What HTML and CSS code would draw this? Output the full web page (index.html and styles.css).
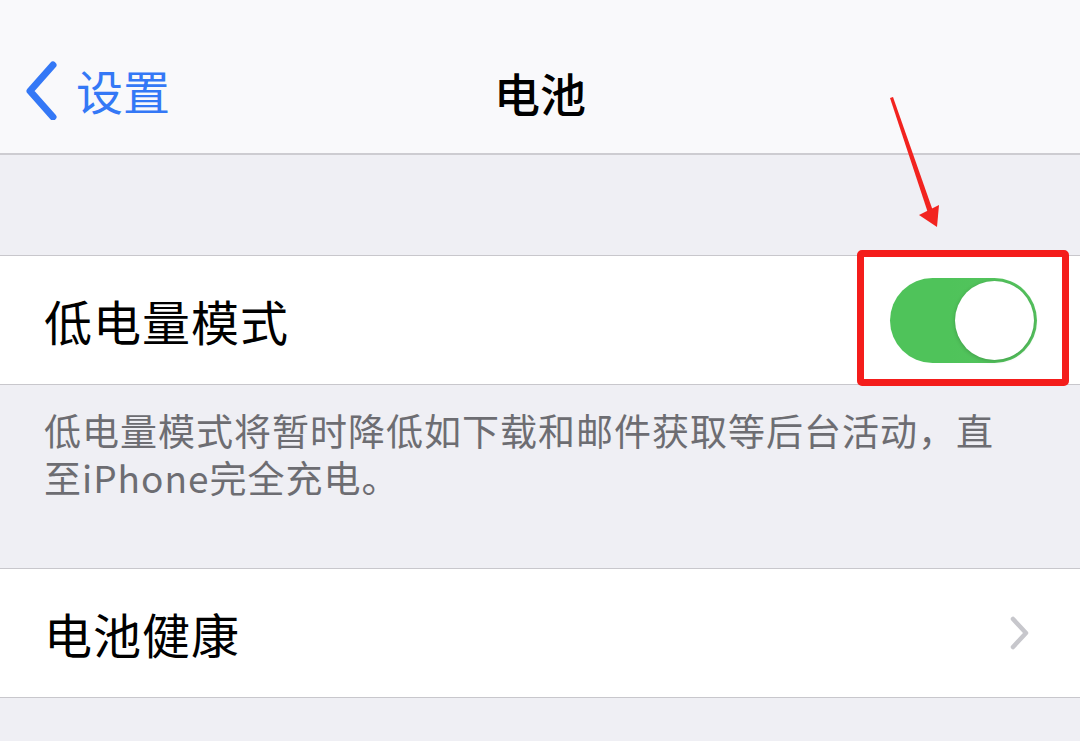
FILE: index.html
```html
<!DOCTYPE html>
<html lang="zh-CN">
<head>
    <meta charset="UTF-8">
    <meta name="viewport" content="width=device-width, initial-scale=1.0">
    <title>电池</title>
    <link rel="stylesheet" href="styles.css">
</head>
<body>
    <!-- Navigation Bar -->
    <div class="nav-bar">
        <div class="nav-back">
            <svg class="back-icon" width="40" height="60" viewBox="0 0 40 60">
                <path d="M31 5 L8 31 L31 57" fill="none" stroke="#3478f6" stroke-width="7" stroke-linecap="round" stroke-linejoin="round"/>
            </svg>
            <span class="back-text">设置</span>
        </div>
        <div class="nav-title">电池</div>
    </div>

    <div class="spacer"></div>

    <!-- Low Power Mode -->
    <div class="group">
        <div class="row">
            <span class="row-label">低电量模式</span>
            <div class="switch on">
                <div class="switch-knob"></div>
            </div>
        </div>
    </div>
    <p class="group-footer">低电量模式将暂时降低如下载和邮件获取等后台活动，直至iPhone完全充电。</p>

    <!-- Battery Health -->
    <div class="group">
        <div class="row">
            <span class="row-label">电池健康</span>
            <svg class="chevron" width="24" height="40" viewBox="0 0 24 40">
                <path d="M5 6 L18 20 L5 34" fill="none" stroke="#c7c7cc" stroke-width="4.5" stroke-linecap="round" stroke-linejoin="round"/>
            </svg>
        </div>
    </div>

    <!-- Annotation -->
    <div class="highlight-box"></div>
    <svg class="annotation-arrow" width="1080" height="741" viewBox="0 0 1080 741">
        <polygon points="890,98 893,97 933,211 928,213" fill="#f2231f"/>
        <polygon points="919,215 939,205 937,227" fill="#f2231f"/>
    </svg>
</body>
</html>
```

FILE: styles.css
```css
/* Basic reset */
* {
    margin: 0;
    padding: 0;
    box-sizing: border-box;
}

body {
    font-family: "Noto Sans CJK SC", "Noto Sans", sans-serif;
    background-color: #efeff4;
    color: #000;
    width: 1080px;
    height: 741px;
    overflow: hidden;
    position: relative;
}

/* Navigation Bar */
.nav-bar {
    height: 155px;
    background-color: #f9f9fb;
    border-bottom: 2px solid #cdccd1;
    position: relative;
    display: flex;
    align-items: center;
    justify-content: center;
}

.nav-back {
    position: absolute;
    left: 22px;
    top: 60px;
    display: flex;
    align-items: center;
    gap: 14px;
}

.back-text {
    font-size: 47px;
    color: #3478f6;
    line-height: 60px;
}

.nav-title {
    font-size: 46px;
    font-weight: 500;
    margin-top: 30px;
}

.spacer {
    height: 100px;
}

/* Groups */
.group {
    background-color: #fff;
    border-top: 1px solid #c8c7cc;
    border-bottom: 1px solid #c8c7cc;
}

.row {
    height: 128px;
    padding: 0 43px 0 44px;
    display: flex;
    align-items: center;
    justify-content: space-between;
}

.row-label {
    font-size: 48px;
    letter-spacing: 1px;
}

.group-footer {
    height: 183px;
    padding: 22px 72px 0 44px;
    font-size: 37px;
    line-height: 47px;
    color: #6d6d72;
    letter-spacing: 1px;
}

/* Switch */
.switch {
    width: 147px;
    height: 85px;
    border-radius: 43px;
    background-color: #e9e9ea;
    padding: 3px;
    display: flex;
}

.switch.on {
    background: linear-gradient(90deg, #4fc35a 40%, #56c45f 100%);
    justify-content: flex-end;
}

.switch-knob {
    width: 79px;
    height: 79px;
    border-radius: 50%;
    background-color: #fff;
    box-shadow: 0 1px 4px rgba(0, 0, 0, 0.2);
}

.chevron {
    margin-right: 5px;
}

/* Annotation */
.highlight-box {
    position: absolute;
    left: 857px;
    top: 250px;
    width: 212px;
    height: 136px;
    border: 7px solid #f41d1b;
    border-radius: 5px;
}

.annotation-arrow {
    position: absolute;
    left: 0;
    top: 0;
    pointer-events: none;
}
```
